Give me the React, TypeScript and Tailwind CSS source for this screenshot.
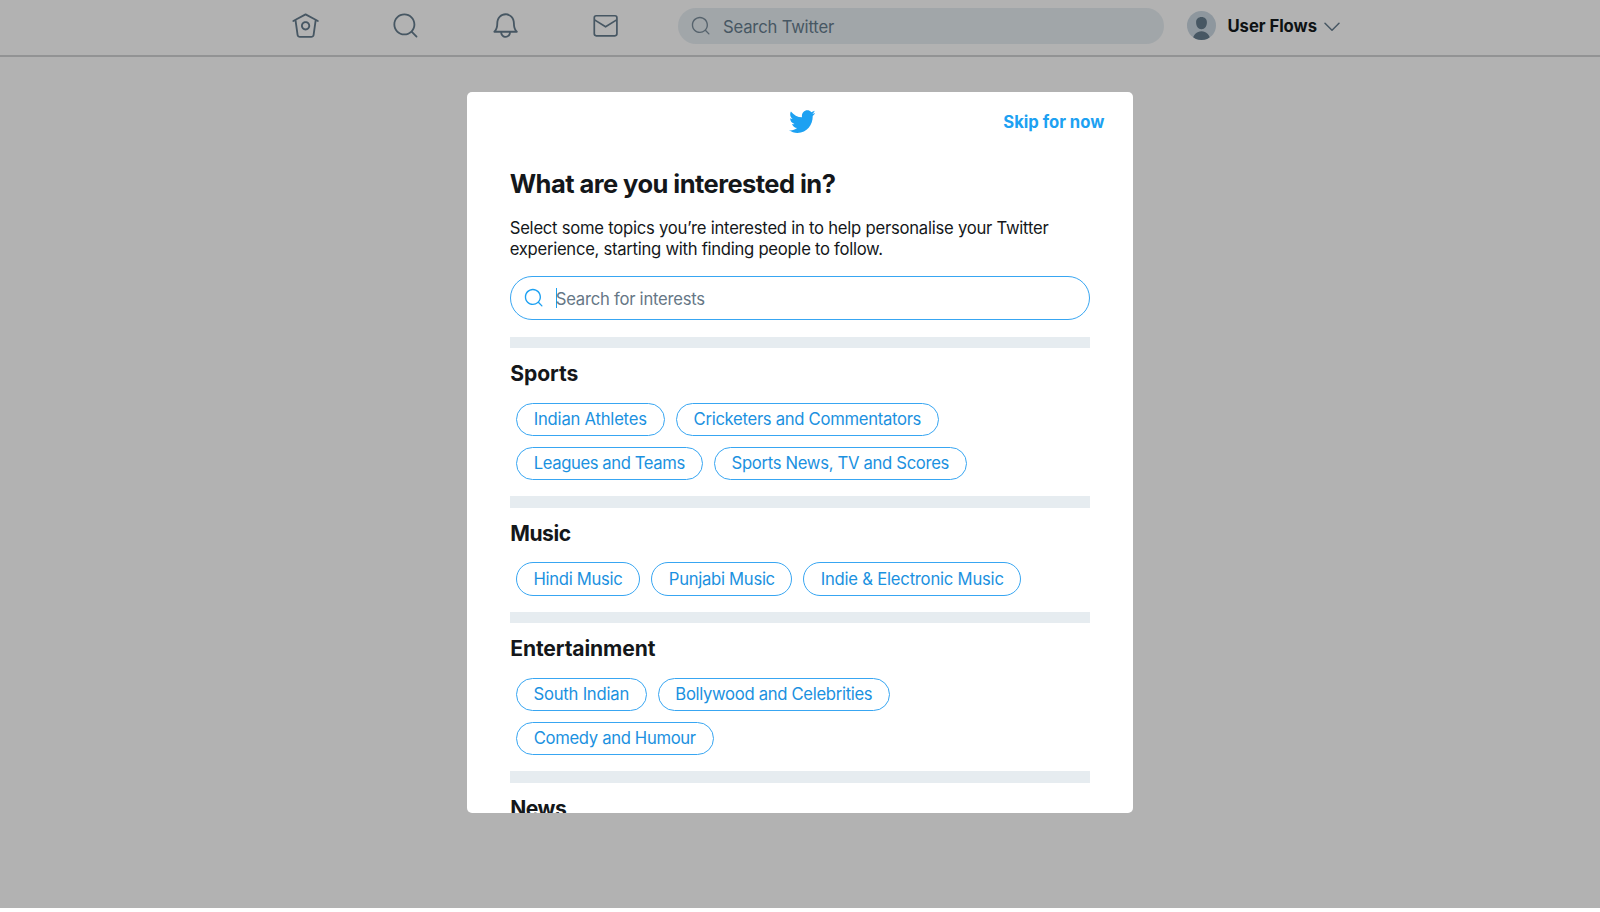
type Topic = { label: string; className: string };
type Section = { title: string; titleClass: string; rows: Topic[][] };

const sections: Section[] = [
  {
    title: "Sports",
    titleClass: "tracking-[-0.07px]",
    rows: [
      [
        { label: "Indian Athletes", className: "w-[149px] tracking-[-0.23px]" },
        { label: "Cricketers and Commentators", className: "w-[263px] tracking-[-0.3px]" },
      ],
      [
        { label: "Leagues and Teams", className: "w-[187px] tracking-[-0.41px]" },
        { label: "Sports News, TV and Scores", className: "w-[253px] tracking-[-0.316px]" },
      ],
    ],
  },
  {
    title: "Music",
    titleClass: "tracking-[-0.44px]",
    rows: [
      [
        { label: "Hindi Music", className: "w-[124.5px] tracking-[-0.31px]" },
        { label: "Punjabi Music", className: "w-[141px] tracking-[-0.3px]" },
        { label: "Indie & Electronic Music", className: "w-[217.5px] tracking-[-0.224px]" },
      ],
    ],
  },
  {
    title: "Entertainment",
    titleClass: "tracking-[-0.12px]",
    rows: [
      [
        { label: "South Indian", className: "w-[131px] tracking-[-0.23px]" },
        { label: "Bollywood and Celebrities", className: "w-[232px] tracking-[-0.32px]" },
      ],
      [{ label: "Comedy and Humour", className: "w-[198px] tracking-[-0.34px]" }],
    ],
  },
  { title: "News", titleClass: "tracking-[-0.5px]", rows: [] },
];

const SEARCH =
  "M21.53 20.47l-3.66-3.66C19.195 15.24 20 13.214 20 11c0-4.97-4.03-9-9-9s-9 4.03-9 9 4.03 9 9 9c2.215 0 4.24-.804 5.808-2.13l3.66 3.66c.147.146.34.22.53.22s.385-.073.53-.22c.295-.293.295-.767.002-1.06zM3.5 11c0-4.135 3.365-7.5 7.5-7.5s7.5 3.365 7.5 7.5-3.365 7.5-7.5 7.5-7.5-3.365-7.5-7.5z";
const HOME =
  "M22.46 7.57L12.357 2.115c-.223-.12-.49-.12-.713 0L1.543 7.57c-.364.197-.5.652-.303 1.017.135.25.394.393.66.393.12 0 .243-.03.356-.09l.815-.44L4.7 19.963c.214 1.215 1.308 2.062 2.658 2.062h9.282c1.352 0 2.445-.848 2.663-2.087l1.626-11.49.818.442c.364.193.82.06 1.017-.304.196-.363.06-.818-.304-1.016zm-4.638 12.133c-.107.606-.703.822-1.18.822H7.36c-.48 0-1.075-.216-1.178-.798L4.48 7.69 12 3.628l7.522 4.06-1.7 12.015z";
const HOME_HOLE =
  "M8.22 12.184c0 2.084 1.695 3.78 3.78 3.78s3.78-1.696 3.78-3.78-1.695-3.78-3.78-3.78-3.78 1.696-3.78 3.78zm6.06 0c0 1.258-1.022 2.28-2.28 2.28s-2.28-1.022-2.28-2.28 1.022-2.28 2.28-2.28 2.28 1.022 2.28 2.28z";
const BELL =
  "M21.697 16.468c-.02-.016-2.14-1.64-2.103-6.03.02-2.532-.812-4.782-2.347-6.335C15.872 2.71 14.01 1.94 12.005 1.93h-.013c-2.004.01-3.866.78-5.242 2.174-1.534 1.553-2.368 3.802-2.346 6.334.037 4.33-2.02 5.967-2.102 6.03-.26.193-.366.53-.265.838.102.308.39.515.712.515h4.92c.102 2.31 1.997 4.16 4.33 4.16s4.226-1.85 4.327-4.16h4.922c.322 0 .61-.206.71-.514.103-.307-.003-.645-.263-.838zM12 20.478c-1.505 0-2.73-1.177-2.828-2.658h5.656c-.1 1.48-1.323 2.66-2.828 2.66zM4.38 16.32c.74-1.132 1.548-3.028 1.524-5.896-.018-2.16.644-3.982 1.913-5.267C8.91 4.05 10.397 3.437 12 3.43c1.603.008 3.087.62 4.18 1.728 1.27 1.285 1.933 3.106 1.915 5.267-.024 2.868.785 4.765 1.525 5.896H4.38z";
const BIRD =
  "M23.643 4.937c-.835.37-1.732.62-2.675.733.962-.576 1.7-1.49 2.048-2.578-.9.534-1.897.922-2.958 1.13-.85-.904-2.06-1.47-3.4-1.47-2.572 0-4.658 2.086-4.658 4.66 0 .364.042.718.12 1.06-3.873-.195-7.304-2.05-9.602-4.868-.4.69-.63 1.49-.63 2.342 0 1.616.823 3.043 2.072 3.878-.764-.025-1.482-.234-2.11-.583v.06c0 2.257 1.605 4.14 3.737 4.568-.392.106-.803.162-1.227.162-.3 0-.593-.028-.877-.082.593 1.85 2.313 3.198 4.352 3.234-1.595 1.25-3.604 1.995-5.786 1.995-.376 0-.747-.022-1.112-.065 2.062 1.323 4.51 2.093 7.14 2.093 8.57 0 13.255-7.098 13.255-13.254 0-.2-.005-.402-.014-.602.91-.658 1.7-1.477 2.323-2.41z";

function Icon({ paths, className }: { paths: string[]; className: string }) {
  return (
    <svg viewBox="0 0 24 24" fill="currentColor" className={className}>
      {paths.map((d) => (
        <path key={d} d={d} />
      ))}
    </svg>
  );
}

function MailIcon({ className }: { className: string }) {
  return (
    <svg viewBox="0 0 24 24" fill="none" stroke="currentColor" strokeWidth="1.4" strokeLinejoin="round" className={className}>
      <rect x="2.7" y="3.9" width="18.6" height="16.5" rx="1.6" />
      <path d="M2.9 7.300L12 13l9.100-5.700" />
    </svg>
  );
}

function TopBar() {
  return (
    <header className="flex h-[57px] shrink-0 items-start border-b-2 border-[#929394] pl-[291px]">
      <nav className="flex gap-[70.8px] pt-[10.5px] text-[#475763]">
        <Icon paths={[HOME, HOME_HOLE]} className="size-[29.2px]" />
        <Icon paths={[SEARCH]} className="size-[29.2px]" />
        <Icon paths={[BELL]} className="size-[29.2px]" />
        <MailIcon className="size-[29.2px]" />
      </nav>
      <div className="mt-[8px] ml-[57.8px] flex h-[36px] w-[486px] items-center rounded-full bg-[#a1a6a9] pl-[12.5px]">
        <Icon paths={[SEARCH]} className="size-[21.6px] text-[#56636d]" />
        <span className="mt-[2px] ml-[11px] text-[16.67px] tracking-[-0.19px] text-[#475763]">Search Twitter</span>
      </div>
      <div className="ml-[23.5px] flex h-[51px] items-center">
        <svg viewBox="0 0 29 29" className="size-[29px]">
          <clipPath id="avatar">
            <circle cx="14.5" cy="14.5" r="14.5" />
          </clipPath>
          <g clipPath="url(#avatar)">
            <rect width="29" height="29" fill="#8e979e" />
            <path
              d="M14.5 6.1c3.3 0 5.4 2.100 5.400 5.100 0 3.900-2 7-5.400 7s-5.400-3.100-5.400-7c0-3 2.100-5.100 5.400-5.100zM5.600 29c.6-5.200 4-8.800 8.900-8.800s8.300 3.600 8.900 8.800z"
              fill="#475763"
            />
          </g>
        </svg>
        <span className="mt-[2px] ml-[11px] text-[16.67px] font-bold tracking-[-0.04px] text-[#0e1214]">User Flows</span>
        <svg viewBox="0 0 16 10" fill="none" stroke="#475763" strokeWidth="1.5" strokeLinecap="round" strokeLinejoin="round" className="mt-[2px] ml-[7.5px] h-[10px] w-[16px]">
          <path d="M1 1.300L8 8.300l7-7" />
        </svg>
      </div>
    </header>
  );
}

function Chip({ topic }: { topic: Topic }) {
  return (
    <button
      className={`m-[5.55px] flex h-[33.3px] shrink-0 items-center justify-center rounded-full border border-[#38a6f2] text-[16.67px] whitespace-nowrap text-[#1b91e0] ${topic.className}`}
    >
      {topic.label}
    </button>
  );
}

function InterestsDialog() {
  return (
    <section className="flex h-[721px] w-[666.6px] flex-col overflow-hidden rounded-[5px] bg-white text-[#14171a]">
      <div className="grid h-[58.7px] shrink-0 grid-cols-[1fr_auto_1fr] items-center pr-[29px] pl-[32.5px]">
        <span />
        <svg viewBox="0 0 24 24" preserveAspectRatio="none" className="h-[29.3px] w-[27.8px] text-[#1da1f2]" fill="currentColor">
          <path d={BIRD} />
        </svg>
        <button className="mt-[2px] justify-self-end text-[16.67px] font-bold tracking-[-0.02px] text-[#1da1f2]">Skip for now</button>
      </div>
      <div className="px-[43px] pt-[16px]">
        <h1 className="text-[25.5px] leading-[33px] font-bold tracking-[-0.55px]">What are you interested in?</h1>
        <p className="mt-[18.3px] text-[16.67px] leading-[21.4px] tracking-[-0.25px] whitespace-nowrap">
          Select some topics you’re interested in to help personalise your Twitter
          <br />
          <span className="tracking-[-0.281px]">experience, starting with finding people to follow.</span>
        </p>
        <div className="mt-[15.2px] mb-[16.300px] flex h-[44.5px] items-center rounded-full border border-[#38a6f2] pl-[12px]">
          <Icon paths={[SEARCH]} className="size-[21.6px] text-[#1da1f2]" />
          <span className="ml-[11.5px] h-[20px] w-px bg-[#1da1f2]" />
          <span className="mt-[2px] -ml-px text-[16.67px] tracking-[-0.25px] text-[#667786]">Search for interests</span>
        </div>
        {sections.map((s) => (
          <div key={s.title} className="pb-[10.5px]">
            <div className="h-[11.1px] bg-[#e6ecf0]" />
            <h2 className={`h-[49.3px] pt-px pl-[0.5px] text-[21.1px] leading-[49.4px] font-bold ${s.titleClass}`}>{s.title}</h2>
            {s.rows.map((row) => (
              <div key={row[0].label} className="flex pl-[0.5px]">
                {row.map((topic) => (
                  <Chip key={topic.label} topic={topic} />
                ))}
              </div>
            ))}
          </div>
        ))}
      </div>
    </section>
  );
}

export default function App() {
  return (
    <div className="h-[912px] w-[1600px] overflow-hidden bg-white font-['Inter',sans-serif]">
      <div className="flex h-[908px] flex-col bg-[#b2b2b2]">
        <TopBar />
        <main className="flex justify-center pt-[35px]">
          <InterestsDialog />
        </main>
      </div>
    </div>
  );
}
